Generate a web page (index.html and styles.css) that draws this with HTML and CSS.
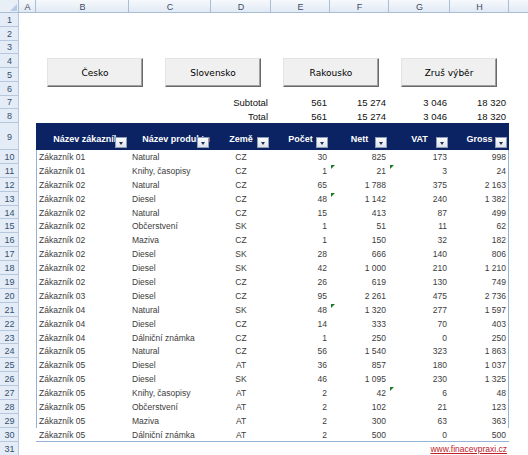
FILE: index.html
```html
<!DOCTYPE html>
<html lang="cs">
  <head>
    <meta charset="UTF-8" />
    <title>Tržby podle zemí</title>
    <link rel="stylesheet" href="styles.css">
  </head>
  <body>
    <table class="sheet">
      <colgroup>
        <col class="c-num" />
        <col class="c-a" />
        <col class="c-b" />
        <col class="c-c" />
        <col class="c-d" />
        <col class="c-e" />
        <col class="c-f" />
        <col class="c-g" />
        <col class="c-h" />
        <col class="c-i" />
      </colgroup>
      <thead>
        <tr class="colhead">
          <th class="corner"></th>
          <th>A</th>
          <th>B</th>
          <th>C</th>
          <th>D</th>
          <th>E</th>
          <th>F</th>
          <th>G</th>
          <th>H</th>
          <th></th>
        </tr>
      </thead>
      <tbody>
        <tr class="row"><th class="num">1</th><td colspan="9"></td></tr>
        <tr class="row"><th class="num">2</th><td colspan="9"></td></tr>
        <tr class="row"><th class="num">3</th><td colspan="9"></td></tr>
        <tr class="row">
          <th class="num">4</th>
          <td></td>
          <td colspan="8" rowspan="3" class="controls">
            <div class="btns">
              <button class="btn">Česko</button>
              <button class="btn">Slovensko</button>
              <button class="btn">Rakousko</button>
              <button class="btn">Zruš výběr</button>
            </div>
          </td>
        </tr>
        <tr class="row"><th class="num">5</th><td></td></tr>
        <tr class="row"><th class="num">6</th><td></td></tr>
        <tr class="row sum">
          <th class="num">7</th>
          <td></td><td></td><td></td>
          <td class="r">Subtotal</td>
          <td class="r">561</td>
          <td class="r">15 274</td>
          <td class="r">3 046</td>
          <td class="r">18 320</td>
          <td></td>
        </tr>
        <tr class="row sum">
          <th class="num">8</th>
          <td></td><td></td><td></td>
          <td class="r">Total</td>
          <td class="r">561</td>
          <td class="r">15 274</td>
          <td class="r">3 046</td>
          <td class="r">18 320</td>
          <td></td>
        </tr>
        <tr class="row-head">
          <th class="num">9</th>
          <td></td>
          <th class="hdr wide"><div class="hcell">Název zákazníka</div><span class="filter"></span></th>
          <th class="hdr wide"><div class="hcell">Název produktu</div><span class="filter"></span></th>
          <th class="hdr"><div class="hcell">Země</div><span class="filter"></span></th>
          <th class="hdr"><div class="hcell">Počet</div><span class="filter"></span></th>
          <th class="hdr"><div class="hcell">Nett</div><span class="filter"></span></th>
          <th class="hdr"><div class="hcell">VAT</div><span class="filter"></span></th>
          <th class="hdr"><div class="hcell">Gross</div><span class="filter"></span></th>
          <td></td>
        </tr>
        <tr class="row data"><th class="num">10</th><td></td><td class="first">Zákazník 01</td><td>Natural</td><td class="c">CZ</td><td class="r">30</td><td class="r">825</td><td class="r">173</td><td class="r last">998</td><td></td></tr>
        <tr class="row data"><th class="num">11</th><td></td><td class="first">Zákazník 01</td><td>Knihy, časopisy</td><td class="c">CZ</td><td class="r">1</td><td class="r flag">21</td><td class="r flag">3</td><td class="r last">24</td><td></td></tr>
        <tr class="row data"><th class="num">12</th><td></td><td class="first">Zákazník 02</td><td>Natural</td><td class="c">CZ</td><td class="r">65</td><td class="r">1 788</td><td class="r">375</td><td class="r last">2 163</td><td></td></tr>
        <tr class="row data"><th class="num">13</th><td></td><td class="first">Zákazník 02</td><td>Diesel</td><td class="c">CZ</td><td class="r">48</td><td class="r flag">1 142</td><td class="r">240</td><td class="r last">1 382</td><td></td></tr>
        <tr class="row data"><th class="num">14</th><td></td><td class="first">Zákazník 02</td><td>Natural</td><td class="c">CZ</td><td class="r">15</td><td class="r">413</td><td class="r">87</td><td class="r last">499</td><td></td></tr>
        <tr class="row data"><th class="num">15</th><td></td><td class="first">Zákazník 02</td><td>Občerstvení</td><td class="c">SK</td><td class="r">1</td><td class="r">51</td><td class="r">11</td><td class="r last">62</td><td></td></tr>
        <tr class="row data"><th class="num">16</th><td></td><td class="first">Zákazník 02</td><td>Maziva</td><td class="c">CZ</td><td class="r">1</td><td class="r">150</td><td class="r">32</td><td class="r last">182</td><td></td></tr>
        <tr class="row data"><th class="num">17</th><td></td><td class="first">Zákazník 02</td><td>Diesel</td><td class="c">SK</td><td class="r">28</td><td class="r">666</td><td class="r">140</td><td class="r last">806</td><td></td></tr>
        <tr class="row data"><th class="num">18</th><td></td><td class="first">Zákazník 02</td><td>Diesel</td><td class="c">SK</td><td class="r">42</td><td class="r">1 000</td><td class="r">210</td><td class="r last">1 210</td><td></td></tr>
        <tr class="row data"><th class="num">19</th><td></td><td class="first">Zákazník 02</td><td>Diesel</td><td class="c">CZ</td><td class="r">26</td><td class="r">619</td><td class="r">130</td><td class="r last">749</td><td></td></tr>
        <tr class="row data"><th class="num">20</th><td></td><td class="first">Zákazník 03</td><td>Diesel</td><td class="c">CZ</td><td class="r">95</td><td class="r">2 261</td><td class="r">475</td><td class="r last">2 736</td><td></td></tr>
        <tr class="row data"><th class="num">21</th><td></td><td class="first">Zákazník 04</td><td>Natural</td><td class="c">SK</td><td class="r">48</td><td class="r flag">1 320</td><td class="r">277</td><td class="r last">1 597</td><td></td></tr>
        <tr class="row data"><th class="num">22</th><td></td><td class="first">Zákazník 04</td><td>Diesel</td><td class="c">CZ</td><td class="r">14</td><td class="r">333</td><td class="r">70</td><td class="r last">403</td><td></td></tr>
        <tr class="row data"><th class="num">23</th><td></td><td class="first">Zákazník 04</td><td>Dálniční známka</td><td class="c">CZ</td><td class="r">1</td><td class="r">250</td><td class="r">0</td><td class="r last">250</td><td></td></tr>
        <tr class="row data"><th class="num">24</th><td></td><td class="first">Zákazník 05</td><td>Natural</td><td class="c">CZ</td><td class="r">56</td><td class="r">1 540</td><td class="r">323</td><td class="r last">1 863</td><td></td></tr>
        <tr class="row data"><th class="num">25</th><td></td><td class="first">Zákazník 05</td><td>Diesel</td><td class="c">AT</td><td class="r">36</td><td class="r">857</td><td class="r">180</td><td class="r last">1 037</td><td></td></tr>
        <tr class="row data"><th class="num">26</th><td></td><td class="first">Zákazník 05</td><td>Diesel</td><td class="c">SK</td><td class="r">46</td><td class="r">1 095</td><td class="r">230</td><td class="r last">1 325</td><td></td></tr>
        <tr class="row data"><th class="num">27</th><td></td><td class="first">Zákazník 05</td><td>Knihy, časopisy</td><td class="c">AT</td><td class="r">2</td><td class="r">42</td><td class="r flag">6</td><td class="r last">48</td><td></td></tr>
        <tr class="row data"><th class="num">28</th><td></td><td class="first">Zákazník 05</td><td>Občerstvení</td><td class="c">AT</td><td class="r">2</td><td class="r">102</td><td class="r">21</td><td class="r last">123</td><td></td></tr>
        <tr class="row data"><th class="num">29</th><td></td><td class="first">Zákazník 05</td><td>Maziva</td><td class="c">AT</td><td class="r">2</td><td class="r">300</td><td class="r">63</td><td class="r last">363</td><td></td></tr>
        <tr class="row data end"><th class="num">30</th><td></td><td class="first">Zákazník 05</td><td>Dálniční známka</td><td class="c">AT</td><td class="r">2</td><td class="r">500</td><td class="r">0</td><td class="r last">500</td><td></td></tr>
        <tr class="row">
          <th class="num">31</th>
          <td colspan="6"></td>
          <td colspan="2" class="r link-cell"><a href="#">www.finacevpraxi.cz</a></td>
          <td></td>
        </tr>
      </tbody>
    </table>
  </body>
</html>
```

FILE: styles.css
```css
* {
  margin: 0;
  padding: 0;
  box-sizing: border-box;
}

body {
  width: 528px;
  height: 455px;
  overflow: hidden;
  background: #fff;
  font-family: "Liberation Sans", Arial, sans-serif;
}

.sheet {
  width: 528px;
  table-layout: fixed;
  border-collapse: separate;
  border-spacing: 0;
  color: #333;
}

.c-num { width: 19px; }
.c-a { width: 17px; }
.c-b { width: 93px; }
.c-c { width: 82px; }
.c-d { width: 60px; }
.c-e { width: 59px; }
.c-f { width: 59px; }
.c-g { width: 61px; }
.c-h { width: 59px; }
.c-i { width: 38px; }

td,
th {
  padding: 0;
  white-space: nowrap;
  overflow: hidden;
}

/* hlavička sloupců */
.colhead th {
  height: 13px;
  font-size: 9px;
  font-weight: 400;
  color: #3b4d66;
  text-align: center;
  background: linear-gradient(#f6f9fc, #dfe8f3);
  box-shadow: inset -1px -1px #a9bed6;
}

.colhead .corner {
  position: relative;
  background: #e9eff7;
}

.colhead .corner::after {
  content: "";
  position: absolute;
  right: 2px;
  bottom: 2px;
  border-left: 7px solid transparent;
  border-bottom: 7px solid #b6cbe6;
}

/* čísla řádků */
.num {
  font-size: 9px;
  font-weight: 400;
  color: #35506e;
  text-align: center;
  background: #e4ecf7;
  box-shadow: inset -1px -1px #b7c8dc;
}

.row {
  height: 13.75px;
}

.data,
.row:last-child {
  height: 13.9px;
}

.row-head {
  height: 27px;
}

/* tlačítka */
.controls {
  vertical-align: top;
}

.btns {
  display: flex;
  gap: 22px;
  padding: 4px 0 0 11px;
}

.btn {
  width: 96px;
  height: 29px;
  font-family: "DejaVu Sans", Verdana, sans-serif;
  font-size: 9px;
  color: #000;
  background: #f0f0f0;
  border: 1px solid;
  border-color: #e3e3e3 #6a6a6a #6a6a6a #e3e3e3;
  box-shadow: inset -1px -1px #a0a0a0;
  cursor: pointer;
}

/* součty */
.sum td {
  font-size: 9.5px;
  color: #111;
  padding: 0 3px;
}

.r {
  text-align: right;
}

.c {
  text-align: center;
}

/* tabulka */
.hdr {
  position: relative;
  background: #0b2362;
  color: #fff;
  font-size: 9px;
  font-weight: 700;
  vertical-align: middle;
  padding-top: 5px;
}

.hcell {
  display: flex;
  justify-content: center;
  white-space: nowrap;
}

.wide .hcell {
  padding-left: 12px;
}

.filter {
  position: absolute;
  right: 2px;
  bottom: 2px;
  width: 12px;
  height: 11px;
  background: linear-gradient(#fdfdfd, #dfe3ea);
  border: 1px solid #8d9db8;
}

.filter::after {
  content: "";
  position: absolute;
  left: 3px;
  top: 4px;
  border-left: 2.5px solid transparent;
  border-right: 2.5px solid transparent;
  border-top: 3px solid #1d2f57;
}

.data td {
  font-size: 8.5px;
  color: #3c3c3c;
  padding: 0 3px;
  vertical-align: middle;
}

.data .first {
  box-shadow: inset 1px 0 #95b3d7;
}

.data .last {
  box-shadow: inset -1px 0 #95b3d7;
}

.end td:not(:first-of-type):not(:last-child) {
  box-shadow: inset 0 -1px #95b3d7;
}

.end .first {
  box-shadow: inset 1px -1px #95b3d7;
}

.end .last {
  box-shadow: inset -1px -1px #95b3d7;
}

/* zelený indikátor chyby */
.flag {
  position: relative;
}

.flag::before {
  content: "";
  position: absolute;
  left: 1px;
  top: 1px;
  border-top: 4px solid #1a7a28;
  border-right: 4px solid transparent;
}

.link-cell {
  font-size: 8.5px;
  padding-right: 2px;
}

.link-cell a {
  color: #c0202a;
  text-decoration: underline;
}
```
